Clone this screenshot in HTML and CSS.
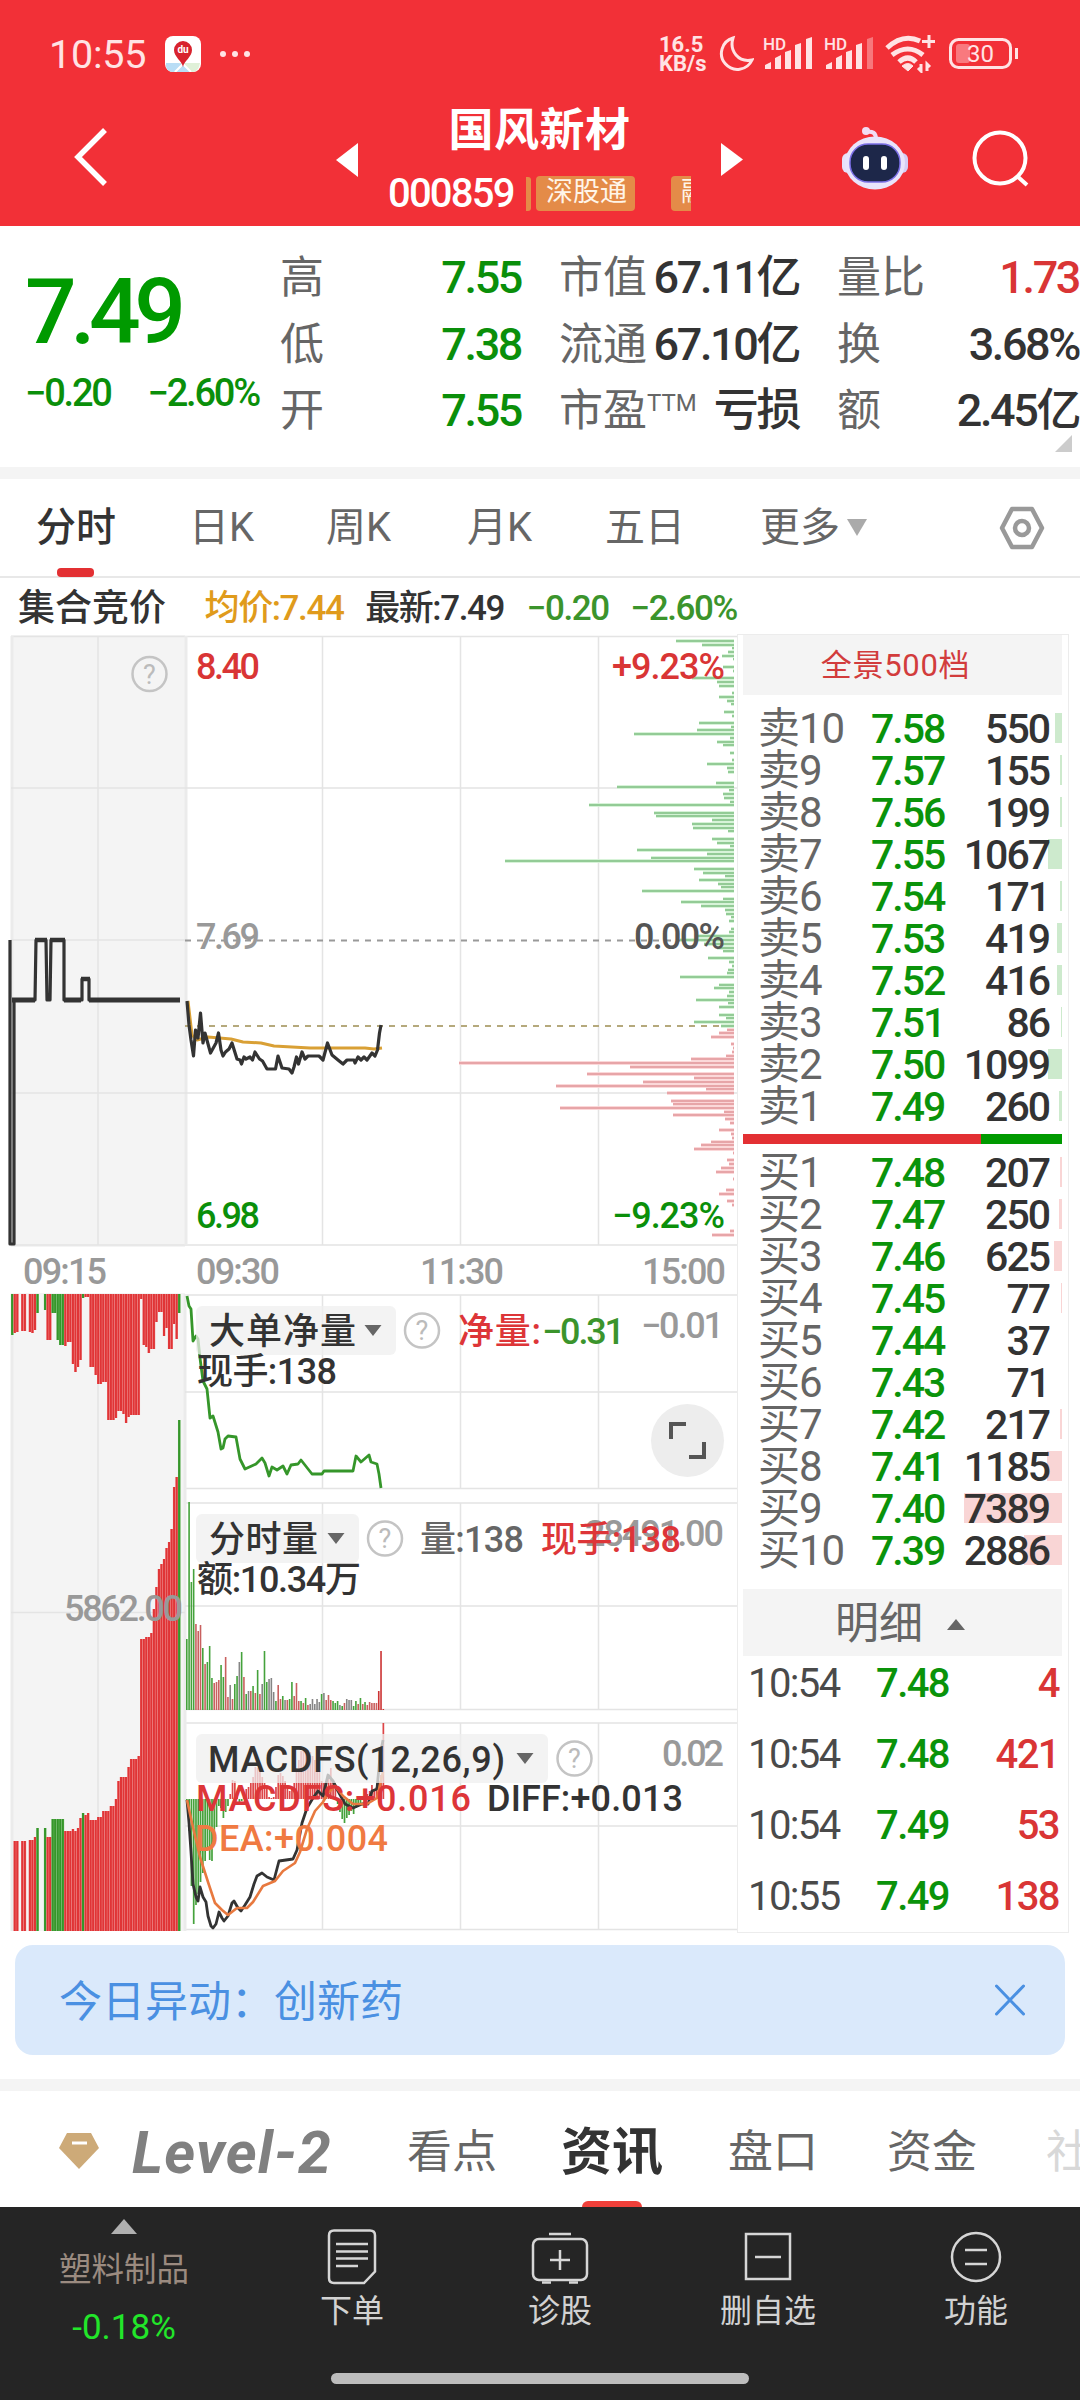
FILE: index.html
```html
<!DOCTYPE html>
<html lang="zh-CN">
<head>
    <meta charset="UTF-8">
    <meta name="viewport" content="width=device-width, initial-scale=1.0">
    <title>国风新材 000859</title>
    <link rel="stylesheet" href="styles.css">
</head>
<body>

    <header class="top">
        <div class="status-bar">
            <div class="status-left">
                <span class="clock">10:55</span>
                <svg class="app-icon" width="36" height="36" viewBox="0 0 36 36">
                    <rect width="36" height="36" rx="8" fill="#fff"/>
                    <path d="M1 27h34l-1 4q-2 5-7 5H9q-6 0-8-6z" fill="#dff0d8"/>
                    <path d="M1 27h12l4 1-8 8q-7 0-8-6zM18 29l8 7H10z" fill="#b9ddf5"/>
                    <path d="M10 36l8-8 8 8" fill="none" stroke="#fff" stroke-width="2"/>
                    <path d="M18 31C17 25 9 21 9 14a9 9 0 0 1 18 0c0 7-8 11-9 17z" fill="#d8232e"/>
                    <text x="18" y="17" class="du">du</text>
                </svg>
                <svg class="dots" width="32" height="8" viewBox="0 0 32 8">
                    <circle cx="4" cy="4" r="3"/><circle cx="16" cy="4" r="3"/><circle cx="28" cy="4" r="3"/>
                </svg>
            </div>
            <div class="status-right">
                <div class="speed"><span>16.5</span><span>KB/s</span></div>
                <svg width="36" height="38" viewBox="0 0 36 38">
                    <path d="M15 3A16 16 0 1 0 34 25Q24 27 18 20T15 3z" class="line"/>
                </svg>
                <svg width="52" height="38" viewBox="0 0 52 38" class="signal">
                    <text x="0" y="15" class="hd">HD</text>
                    <path d="M2 30l6-3v7H2zM12 23l6-3v14h-6zM22 17l6-2v19h-6zM32 10l6-2v26h-6zM43 4l6-2v32h-6z"/>
                </svg>
                <svg width="52" height="38" viewBox="0 0 52 38" class="signal">
                    <text x="0" y="15" class="hd">HD</text>
                    <path d="M2 30l6-3v7H2zM12 23l6-3v14h-6zM22 17l6-2v19h-6zM32 10l6-2v26h-6z"/>
                    <path d="M43 4l6-2v32h-6z" opacity=".4"/>
                </svg>
                <svg width="52" height="38" viewBox="0 0 52 38" class="wifi">
                    <path d="M2 13Q18-2 35 6M7 20Q23 8 38 20M14 27Q23 19 31 27" fill="none" stroke-width="5"/>
                    <path d="M17 31q6-5 11 0l-5 5z"/>
                    <path d="M44 0v13M37 6.500h13M36 29v7l-3-3M42 36v-7l3 3" fill="none" stroke-width="3"/>
                </svg>
                <svg width="70" height="38" viewBox="0 0 70 38">
                    <rect x="1.500" y="4.500" width="60" height="28" rx="8" class="line"/>
                    <rect x="7" y="9" width="14" height="19" rx="3" class="charge"/>
                    <path d="M66 13h3v11h-3z" fill="#ffe3e4"/>
                    <text x="31.500" y="27" class="battery">30</text>
                </svg>
            </div>
        </div>

        <div class="title-bar">
            <svg width="36" height="60" viewBox="0 0 36 60"><path d="M33 3L6 30l27 27" class="back"/></svg>
            <svg class="prev" width="22" height="34" viewBox="0 0 22 34"><path d="M22 0v34L0 17z" fill="#fff"/></svg>
            <div class="stock">
                <h1>国风新材</h1>
                <div class="stock-sub">
                    <span class="code">000859</span>
                    <i class="tag-rest"></i>
                    <span class="tag">深股通</span>
                    <span class="tag tag-next">融资</span>
                </div>
            </div>
            <svg class="next" width="22" height="33" viewBox="0 0 22 33"><path d="M0 0v33l22-16.500z" fill="#fff"/></svg>
            <svg class="robot" width="66" height="64" viewBox="0 0 66 64">
                <circle cx="24" cy="5" r="4" fill="#f2dcf4"/>
                <path d="M24 6q10-2 10 7" fill="none" stroke="#f2dcf4" stroke-width="4"/>
                <rect x="0" y="27" width="12" height="20" rx="6" fill="#e6e2fa"/>
                <rect x="54" y="27" width="12" height="20" rx="6" fill="#d5cdf5"/>
                <ellipse cx="33" cy="37" rx="30" ry="26.500" fill="#e9e4fb"/>
                <rect x="8" y="18" width="50" height="38" rx="18" fill="#1d2749" stroke="#7b6fe6" stroke-width="1.500"/>
                <rect x="21" y="30" width="6" height="14" rx="3" fill="#fff"/>
                <rect x="39" y="30" width="6" height="14" rx="3" fill="#fff"/>
            </svg>
            <svg class="search" width="58" height="58" viewBox="0 0 58 58">
                <circle cx="28" cy="28" r="25.500"/><path d="M45 46l10 9"/>
            </svg>
        </div>
    </header>

    <section class="quote">
        <div class="quote-main">
            <div class="price">7.49</div>
            <div class="change"><span>−0.20</span><span>−2.60%</span></div>
        </div>
        <dl class="stats">
            <div><dt>高</dt><dd class="green">7.55</dd></div>
            <div><dt>市值</dt><dd>67.11亿</dd></div>
            <div><dt>量比</dt><dd class="red">1.73</dd></div>
            <div><dt>低</dt><dd class="green">7.38</dd></div>
            <div><dt>流通</dt><dd>67.10亿</dd></div>
            <div><dt>换</dt><dd>3.68%</dd></div>
            <div><dt>开</dt><dd class="green">7.55</dd></div>
            <div><dt>市盈<sup>TTM</sup></dt><dd>亏损</dd></div>
            <div><dt>额</dt><dd>2.45亿</dd></div>
        </dl>
        <i class="corner"></i>
    </section>

    <nav class="periods">
        <span class="active">分时</span>
        <span>日K</span>
        <span>周K</span>
        <span>月K</span>
        <span>五日</span>
        <span class="more">更多 <i></i></span>
        <svg width="46" height="44" viewBox="0 0 46 44">
            <path d="M13 3h20l10 19-10 19H13L3 22z"/><circle cx="23" cy="22" r="7"/>
        </svg>
    </nav>

    <main class="market">
        <div class="charts">
            <div class="chart-info">
                <span class="auction">集合竞价</span>
                <span class="avg">均价:7.44</span>
                <span class="last">最新:7.49</span>
                <span class="diff">−0.20</span>
                <span class="pct">−2.60%</span>
            </div>
            <!-- drawn in page units, see chart.js -->
            <svg id="chart" width="738" height="1300" viewBox="0 634 738 1300">
                <rect x="11" y="635" width="174" height="1296" fill="#f4f4f4"/>
                <rect x="0" y="1247" width="738" height="46" fill="#fff"/>
                <g class="grid">
                    <path d="M11 636.500H737M11 1245H737M185 1295H737M185 1488.500H737M185 1503H737M185 1709.500H737M185 1723H737M185 1929.500H737"/>
                    <path d="M12 636V1245M186 636V1245M12 1294V1931M185 1294V1931" class="wide"/>
                    <path d="M11 788H737M11 940H185M11 1093H737M11 1612.500H185M185 1392H737M185 1606H737M185 1826H737"/>
                    <path d="M98 636V1245M322.500 636V1245M460.500 636V1245M598.500 636V1245M98 1294V1931"/>
                    <path d="M322.500 1295V1488M460.500 1295V1488M598.500 1295V1488M322.500 1503V1709M460.500 1503V1709M598.500 1503V1709M322.500 1723V1929M460.500 1723V1929M598.500 1723V1929"/>
                </g>
                <path d="M185 940.500H737" stroke="#999" stroke-width="2" stroke-dasharray="6 6"/>
                <path d="M185 1026H737" stroke="#b5a97c" stroke-width="2" stroke-dasharray="6 6"/>
                <g id="bars"></g>
                <g id="lines"></g>

                <g class="axis">
                    <text x="196" y="679" textLength="64" class="t-red">8.40</text>
                    <text x="612" y="679" textLength="113" class="t-red">+9.23%</text>
                    <text x="196" y="949" textLength="64">7.69</text>
                    <text x="634" y="949" textLength="91" class="t-dark">0.00%</text>
                    <text x="196" y="1228" textLength="64" class="t-green">6.98</text>
                    <text x="612" y="1228" textLength="113" class="t-green">−9.23%</text>
                    <text x="23" y="1284" textLength="84">09:15</text>
                    <text x="196" y="1284" textLength="84">09:30</text>
                    <text x="420" y="1284" textLength="84">11:30</text>
                    <text x="642" y="1284" textLength="84">15:00</text>
                    <text x="64" y="1621" textLength="119">5862.00</text>
                    <text x="641" y="1338" textLength="83">−0.01</text>
                    <text x="585" y="1546" textLength="139">28491.00</text>
                    <text x="662" y="1766" textLength="62">0.02</text>
                </g>

                <g class="pill">
                    <rect x="196" y="1306" width="200" height="49" rx="6"/>
                    <rect x="196" y="1514" width="163" height="49" rx="6"/>
                    <rect x="196" y="1734" width="352" height="49" rx="6"/>
                </g>
                <g class="caret">
                    <path d="M364.500 1325h17l-8.500 11zM327.500 1533h17l-8.500 11zM516.500 1753h17l-8.500 11z"/>
                </g>
                <g class="indicator">
                    <text x="209" y="1344" textLength="147">大单净量</text>
                    <text x="458" y="1344" textLength="83" class="i-red">净量:</text>
                    <text x="542" y="1344" textLength="83" class="i-green">−0.31</text>
                    <text x="197" y="1384" textLength="140">现手:138</text>
                    <text x="209" y="1552" textLength="109">分时量</text>
                    <text x="420" y="1552" textLength="104" class="i-grey">量:138</text>
                    <text x="541" y="1552" textLength="140" class="i-red">现手:138</text>
                    <text x="197" y="1592" textLength="164">额:10.34万</text>
                    <text x="208" y="1772" textLength="297">MACDFS(12,26,9)</text>
                    <text x="196" y="1811" textLength="275" class="i-red">MACDFS:+0.016</text>
                    <text x="487" y="1811" textLength="196">DIFF:+0.013</text>
                    <text x="195" y="1851" textLength="193" class="i-orange">DEA:+0.004</text>
                </g>
                <g class="help">
                    <circle cx="149.500" cy="674" r="17"/><text x="149.500" y="684">?</text>
                    <circle cx="422" cy="1330.500" r="17"/><text x="422" y="1340">?</text>
                    <circle cx="385" cy="1538.500" r="17"/><text x="385" y="1548">?</text>
                    <circle cx="574.500" cy="1758.500" r="17"/><text x="574.500" y="1768">?</text>
                </g>
                <circle cx="687.500" cy="1440.500" r="36.500" fill="#ededed"/>
                <path d="M671 1439v-15h15M704 1442v15h-15" fill="none" stroke="#555" stroke-width="4"/>
            </svg>
        </div>

        <aside class="book">
            <div class="book-head">全景500档</div>
            <div class="levels" id="sell"></div>
            <div class="ratio"><i></i></div>
            <div class="levels" id="buy"></div>
            <div class="detail-head">明细<i></i></div>
            <div class="ticks">
                <div><span>10:54</span><b>7.48</b><em>4</em></div>
                <div><span>10:54</span><b>7.48</b><em>421</em></div>
                <div><span>10:54</span><b>7.49</b><em>53</em></div>
                <div><span>10:55</span><b>7.49</b><em>138</em></div>
            </div>
        </aside>
    </main>

    <div class="notice">
        <span>今日异动：创新药</span>
        <svg width="30" height="32" viewBox="0 0 30 32"><path d="M1.500 2l27 28M28.500 2l-27 28"/></svg>
    </div>

    <nav class="sections">
        <svg class="gem" width="42" height="38" viewBox="0 0 42 38">
            <path d="M9 1h24l8 15-20 21L1 16z" fill="#cdaa78"/>
            <path d="M14 11h15" stroke="#fff" stroke-width="3"/>
        </svg>
        <span class="level2">Level-2</span>
        <span class="item">看点</span>
        <span class="item active">资讯</span>
        <span class="item">盘口</span>
        <span class="item">资金</span>
        <span class="item cut">社区</span>
    </nav>

    <footer class="toolbar">
        <div class="tools">
            <div class="sector">
                <i></i>
                <span>塑料制品</span>
                <b>-0.18%</b>
            </div>
            <div class="tool">
                <svg width="58" height="58" viewBox="0 0 58 58">
                    <path d="M11 2.500h36q5 0 5 5v36L41 55H11q-5 0-5-5V7.500q0-5 5-5z"/>
                    <path d="M13 16h32M13 23.500h32M13 30.500h32M13 38h22"/>
                </svg>
                <span>下单</span>
            </div>
            <div class="tool">
                <svg width="58" height="58" viewBox="0 0 58 58">
                    <rect x="2" y="11" width="54" height="41" rx="6"/>
                    <path d="M18 6h22M29 22v20M19 32h20M11 54.500h9M38 54.500h9"/>
                </svg>
                <span>诊股</span>
            </div>
            <div class="tool">
                <svg width="58" height="58" viewBox="0 0 58 58">
                    <rect x="7" y="6" width="44" height="45"/><path d="M16 29h26"/>
                </svg>
                <span>删自选</span>
            </div>
            <div class="tool">
                <svg width="58" height="58" viewBox="0 0 58 58">
                    <circle cx="29" cy="29" r="24"/><path d="M18 22h22M18 36h22"/>
                </svg>
                <span>功能</span>
            </div>
        </div>
        <div class="home-bar"></div>
    </footer>

    <script src="chart.js"></script>
</body>
</html>
```
FILE: styles.css
```css
* {
    box-sizing: border-box;
}

body {
    margin: 0;
    width: 1080px;
    height: 2400px;
    overflow: hidden;
    background-color: #fff;
    color: #333;
    font-family: Roboto, "Noto Sans CJK SC", sans-serif;
}

svg {
    display: block;
    flex: none;
}

i, em {
    font-style: normal;
}

.green { color: #0a8f0a; }
.red { color: #d93535; }

/* header */
.top {
    height: 226px;
    background-color: #f23037;
    color: #fff;
}

.status-bar {
    height: 90px;
    padding: 18px 61px 0 49px;
    display: flex;
    justify-content: space-between;
    align-items: center;
    color: #ffe3e4;
}

.status-left,
.status-right {
    display: flex;
    align-items: center;
}

.clock {
    width: 116px;
    font-size: 39.5px;
    letter-spacing: -0.2px;
}

.dots {
    margin-left: 18px;
    fill: #ffe3e4;
}

.du {
    font-size: 10px;
    font-weight: 700;
    fill: #fff;
    text-anchor: middle;
}

.status-right svg {
    margin-right: 9px;
}

.status-right .wifi {
    margin-right: 12px;
}

.status-right svg:last-child {
    margin-right: 0;
}

.speed {
    width: 59px;
    display: flex;
    flex-direction: column;
    font-size: 22px;
    line-height: 19px;
    font-weight: 700;
}

.line {
    fill: none;
    stroke: #ffe3e4;
    stroke-width: 3;
}

.signal {
    fill: #ffe3e4;
}

.hd {
    font-size: 17px;
    font-weight: 500;
}

.wifi {
    fill: #ffe3e4;
    stroke: #ffe3e4;
}

.charge {
    fill: #f9797e;
}

.battery {
    font-size: 24px;
    fill: #ffe3e4;
    text-anchor: middle;
}

.title-bar {
    height: 136px;
    padding: 8px 0 0 72px;
    display: flex;
    align-items: flex-start;
}

.title-bar > svg {
    margin-top: 29px;
}

.back {
    fill: none;
    stroke: #fff;
    stroke-width: 5.5;
}

.title-bar > .prev {
    margin: 45px 0 0 228px;
}

.stock {
    width: 303px;
    margin-left: 30px;
    padding-top: 1px;
    overflow: hidden;
}

.stock h1 {
    margin: 0;
    font-size: 45px;
    font-weight: 700;
    line-height: 64px;
    text-align: center;
    letter-spacing: 0.5px;
}

.stock-sub {
    display: flex;
    align-items: center;
    height: 61px;
    width: 400px;
}

.code {
    width: 138px;
    font-size: 40px;
    font-weight: 500;
    letter-spacing: -1.8px;
}

.tag-rest {
    width: 5px;
    height: 34px;
    margin-right: 5px;
    border-radius: 0 3px 3px 0;
    background-color: #e48b48;
}

.tag {
    width: 99px;
    height: 35px;
    padding-left: 10px;
    border-radius: 4px;
    background-color: #e48b48;
    font-size: 27px;
    line-height: 33px;
    color: #fff5e8;
    white-space: nowrap;
}

.tag-next {
    margin-left: 36px;
}

.title-bar > .next {
    margin: 45px 0 0 30px;
}

.title-bar > .robot {
    margin: 28px 0 0 99px;
}

.title-bar > .search {
    margin: 32px 0 0 64px;
}

.search {
    fill: none;
    stroke: #fff;
    stroke-width: 4;
}

/* quote */
.quote {
    position: relative;
    height: 253px;
    border-bottom: 12px solid #f4f4f4;
    display: flex;
    align-items: flex-start;
}

.quote-main {
    width: 280px;
    padding: 34px 0 0 25px;
    color: #0a8f0a;
}

.price {
    font-size: 91px;
    font-weight: 500;
    line-height: 104px;
    letter-spacing: -6.5px;
    color: #009a00;
}

.change {
    display: flex;
    justify-content: space-between;
    width: 234px;
    margin-top: 7px;
    font-size: 38px;
    font-weight: 500;
    line-height: 44px;
    letter-spacing: -2.2px;
}

.stats {
    margin: 19px 0 0;
    display: grid;
    grid-template-columns: 241px 240px 242px;
    grid-auto-rows: 66.5px;
    column-gap: 38px;
}

.stats div {
    display: flex;
    justify-content: space-between;
    align-items: center;
    white-space: nowrap;
    line-height: 66px;
}

.stats dt {
    font-size: 44px;
    color: #666;
}

.stats dd {
    margin: 0;
    font-size: 45px;
    font-weight: 500;
    letter-spacing: -2.4px;
}

.stats sup {
    font-size: 24px;
    line-height: 1;
    vertical-align: 15px;
}

.corner {
    position: absolute;
    right: 8px;
    bottom: 15px;
    border-left: 17px solid transparent;
    border-bottom: 17px solid #ccc;
}

/* period tabs */
.periods {
    height: 99px;
    border-bottom: 2px solid #e8e8e8;
    display: grid;
    grid-template-columns: 153px 137px 141px 138px 155px 239px 1fr;
    padding-left: 36px;
    font-size: 40px;
    line-height: 98px;
    color: #666;
}

.periods .active {
    position: relative;
    font-weight: 500;
    color: #333;
}

.periods .active::after {
    content: "";
    position: absolute;
    left: 21px;
    bottom: 0;
    width: 37px;
    height: 9px;
    border-radius: 4px;
    background-color: #e33033;
}

.periods svg {
    margin-top: 27px;
    fill: none;
    stroke: #999;
    stroke-width: 4.5;
    stroke-linejoin: round;
}

.more i {
    display: inline-block;
    margin: 0 0 5px -3px;
    border: 10px solid transparent;
    border-top: 17px solid #aaa;
    border-bottom: 0;
}

/* charts */
.market {
    height: 1367px;
    display: flex;
}

.charts {
    width: 737px;
}

.chart-info {
    height: 56px;
    padding-left: 18px;
    display: flex;
    font-size: 35px;
    font-weight: 500;
    line-height: 62px;
    letter-spacing: -1.4px;
    white-space: nowrap;
}

.auction { width: 187px; font-size: 37px; letter-spacing: 0; }
.avg { width: 161px; color: #e09b1c; }
.last { width: 162px; }
.diff { width: 104px; color: #3b942c; }
.pct { color: #3b942c; }

.grid path {
    fill: none;
    stroke: #e4e4e4;
    stroke-width: 1.5;
}

.grid .wide {
    stroke: #ebebeb;
    stroke-width: 3;
}

.axis {
    font-size: 36px;
    font-weight: 500;
    fill: #999;
}

.t-red { fill: #d93535; }
.t-green { fill: #0a8f0a; }
.t-dark { fill: #555; }

.pill {
    fill: #efefef;
    fill-opacity: 0.75;
}

.caret {
    fill: #666;
}

.indicator {
    font-size: 36px;
    font-weight: 500;
    fill: #333;
}

.i-red { fill: #dd3538; }
.i-green { fill: #3b942c; }
.i-grey { fill: #666; }
.i-orange { fill: #f07a42; }

.help circle {
    fill: none;
    stroke: #c4c4c4;
    stroke-width: 2.5;
}

.help text {
    font-size: 27px;
    fill: #bbb;
    text-anchor: middle;
}

/* order book */
.book {
    width: 332px;
    height: 1299px;
    margin-top: 56px;
    padding: 0 6px 0 5px;
    border: 1.5px solid #ececec;
}

.book-head {
    height: 60px;
    padding-right: 14px;
    background-color: #f4f4f4;
    color: #d23c3c;
    font-size: 31px;
    line-height: 61px;
    letter-spacing: 0.7px;
    text-align: center;
}

.levels {
    padding-top: 13px;
}

.levels div {
    position: relative;
    height: 42px;
    padding: 0 13px 0 15px;
    display: grid;
    grid-template-columns: 113px 80px 1fr;
    font-size: 41px;
    line-height: 42px;
    white-space: nowrap;
}

.levels span {
    font-size: 42px;
    color: #666;
    letter-spacing: -1px;
}

.levels b {
    font-weight: 500;
    letter-spacing: -2px;
    color: #0a930a;
}

.levels em {
    position: relative;
    font-weight: 500;
    letter-spacing: -2px;
    text-align: right;
}

/* volume bar lies behind the number */
.levels i {
    position: absolute;
    right: 0;
    top: 5px;
    height: 30px;
    background-color: #cdeacd;
}

#buy i {
    background-color: #f9d5d5;
}

.ratio {
    height: 10px;
    margin-top: 6px;
    background-color: #009a00;
}

.ratio i {
    display: block;
    width: 238px;
    height: 10px;
    background-color: #e33033;
}

#buy {
    padding-top: 8px;
}

.detail-head {
    height: 67px;
    margin-top: 17px;
    padding: 3px 0 0 92px;
    display: flex;
    align-items: center;
    background-color: #f4f4f4;
    color: #666;
    font-size: 44px;
    line-height: 60px;
}

.detail-head i {
    margin-left: 24px;
    border: 9px solid transparent;
    border-bottom: 11px solid #666;
    border-top: 0;
}

.ticks div {
    height: 71px;
    padding: 3px 3px 0 5px;
    display: grid;
    grid-template-columns: 128px 80px 1fr;
    font-size: 40px;
    line-height: 50px;
    letter-spacing: -1.6px;
}

.ticks span { color: #4a4a4a; }
.ticks b { font-weight: 500; color: #0a930a; }
.ticks em { font-weight: 500; color: #d93535; text-align: right; }

/* notice */
.notice {
    height: 110px;
    margin: 0 15px 24px;
    padding: 0 40px 0 44px;
    display: flex;
    align-items: center;
    justify-content: space-between;
    border-radius: 18px;
    background-color: #dae9fb;
    color: #4a90e2;
    font-size: 43px;
}

.notice span {
    padding-bottom: 5px;
}

.notice svg {
    fill: none;
    stroke: #4a90e2;
    stroke-width: 3;
    stroke-linecap: round;
}

/* section tabs */
.sections {
    height: 128px;
    padding-left: 58px;
    border-top: 12px solid #f4f4f4;
    display: flex;
    overflow: hidden;
    font-size: 45px;
    line-height: 124px;
    color: #666;
    white-space: nowrap;
}

.gem {
    margin-top: 41px;
}

.level2 {
    flex: none;
    width: 275px;
    margin-left: 32px;
    font-size: 59px;
    font-weight: 700;
    font-style: italic;
    letter-spacing: 1.2px;
    color: #808080;
}

.item {
    flex: none;
    width: 154px;
    height: 116px;
}

.item + .item.active {
    position: relative;
    width: 167px;
    font-size: 51px;
    font-weight: 700;
    color: #333;
}

.item.active::after {
    content: "";
    position: absolute;
    left: 21px;
    bottom: 0;
    width: 60px;
    height: 6px;
    border-radius: 6px 6px 0 0;
    background-color: #f0403a;
}

.active + .item {
    width: 159px;
}

.item.cut {
    margin-left: 5px;
    color: #d8d8d8;
}

/* bottom toolbar */
.toolbar {
    height: 193px;
    background-color: #252525;
}

.tools {
    height: 166px;
    display: grid;
    grid-template-columns: 248px repeat(4, 208px);
}

.sector {
    display: flex;
    flex-direction: column;
    align-items: center;
    padding-top: 12px;
}

.sector i {
    border: 13px solid transparent;
    border-bottom: 15px solid #b0b0b0;
    border-top: 0;
}

.sector span {
    margin-top: 12px;
    font-size: 32.5px;
    line-height: 48px;
    color: #9b8b80;
}

.sector b {
    margin-top: 12px;
    font-size: 35px;
    font-weight: 400;
    line-height: 44px;
    color: #22e62a;
}

.tool {
    display: flex;
    flex-direction: column;
    align-items: center;
    padding-top: 21px;
    font-size: 32px;
    line-height: 50px;
    color: #d2d2d2;
}

.tool svg {
    fill: none;
    stroke: #d6d6d6;
    stroke-width: 2.5;
}

.home-bar {
    width: 418px;
    height: 11px;
    margin: 0 auto;
    border-radius: 6px;
    background-color: #bdbdbd;
}
```
FILE: chart.js
```js
const RED = '#e03436', GREEN = '#35962a', GREY = '#858585', BLACK = '#333';

function rect(x, y, w, h, fill, opacity) {
    return `<rect x="${x}" y="${y}" width="${w}" height="${h}" fill="${fill}" opacity="${opacity || 1}"/>`;
}

function line(points, color, width) {
    return `<polyline points="${points}" fill="none" stroke="${color}" stroke-width="${width}" stroke-linejoin="round"/>`;
}

// price distribution: [y, length]
const asks = [[641,58],[645,32],[648,2],[652,6],[656,12],[659,1],[667,11],[671,1],[678,42],[682,17],[686,15],[693,2],[697,15],[701,7],[704,3],[712,10],[716,2],[723,35],[727,3],[730,37],[734,100],[738,4],[742,17],[745,11],[753,4],[760,2],[764,27],[768,7],[772,6],[783,18],[787,117],[790,5],[794,11],[798,10],[802,4],[805,145],[813,80],[816,78],[820,22],[824,42],[828,41],[831,6],[839,22],[843,17],[846,4],[850,97],[854,27],[858,83],[861,229],[869,40],[873,31],[876,9],[880,35],[884,16],[887,13],[891,92],[899,11],[902,53],[906,33],[910,9],[914,8],[917,3],[921,5],[929,3],[932,5],[936,37],[940,54],[944,30],[948,17],[951,11],[958,26],[962,5],[966,2],[970,6],[973,7],[977,54],[985,15],[988,20],[992,5],[996,7],[1000,38],[1003,6],[1007,15],[1015,15],[1018,8],[1022,40],[1026,13]];
const bids = [[1030,7],[1033,15],[1037,23],[1044,3],[1048,1],[1052,2],[1056,8],[1059,43],[1063,275],[1067,104],[1074,147],[1078,40],[1082,91],[1086,178],[1089,28],[1093,67],[1101,63],[1104,61],[1108,174],[1112,10],[1115,61],[1119,9],[1123,4],[1130,15],[1134,3],[1138,2],[1142,23],[1145,33],[1149,40],[1153,1],[1160,7],[1164,5],[1168,13],[1172,18],[1179,1],[1190,8],[1194,15],[1201,7],[1205,2],[1231,4],[1235,22]];

// call auction: runs of [count, color, height], 0 is a gap
const unmatched = [[1,'g',41],[1,'r',39],[1,'r',38],[1,'r',0],[2,'r',37],[1,'r',0],[1,'r',38],[1,'r',39],[1,'r',36],[1,'g',19],[2,'g',0],[1,'g',16],[2,'r',46],[2,'g',19],[1,'g',46],[2,'g',51],[1,'r',52],[2,'r',48],[1,'r',70],[1,'r',78],[1,'r',73],[1,'r',66],[1,'g',4],[2,'r',3],[2,'r',73],[1,'r',81],[2,'r',90],[2,'r',88],[3,'r',126],[1,'r',124],[2,'r',117],[1,'r',120],[1,'r',129],[1,'r',123],[4,'r',121],[1,'r',5],[1,'r',51],[1,'r',53],[1,'r',59],[2,'r',55],[1,'r',28],[2,'r',18],[1,'r',42],[1,'r',34],[2,'r',55],[1,'r',30],[1,'r',45],[1,'g',19]];
const matched = [[1,'r',0],[2,'r',90],[1,'r',0],[2,'r',90],[1,'r',0],[2,'r',91],[1,'r',94],[1,'g',103],[2,'g',0],[1,'g',103],[2,'r',94],[5,'g',112],[3,'r',100],[1,'r',102],[1,'r',100],[1,'r',103],[1,'r',113],[1,'g',118],[1,'r',116],[1,'r',118],[3,'r',111],[2,'r',114],[3,'r',120],[2,'r',125],[1,'r',132],[1,'r',150],[3,'r',154],[1,'r',164],[3,'r',172],[1,'r',175],[2,'r',292],[2,'r',294],[1,'r',298],[1,'r',322],[1,'r',344],[1,'r',362],[1,'r',367],[1,'r',372],[1,'r',383],[1,'r',389],[1,'r',402],[1,'r',444],[1,'r',454],[1,'g',511]];

// minute volume and its colors
const volume = [71,208,128,141,86,79,85,62,46,48,64,32,27,28,30,45,33,53,13,25,11,26,34,48,58,33,16,19,19,24,17,40,16,26,59,28,31,32,18,9,25,11,14,10,10,11,28,14,27,9,9,7,12,5,6,11,6,11,8,16,17,10,15,10,9,7,9,5,4,7,11,10,10,4,9,6,12,6,8,5,8,7,7,7,19,59,1];
const volumeColor = 'ggggrrrgrgggrrrggrrkrggkgrgkrgrgrkggkkkgrrgkrggrrrgrgrkkkkkgkrrrgggkgrkkkggrgrgrrrrrrrg';

const macd = [-3,-32,-87,-125,-106,-95,-83,-74,-62,-49,-61,-62,-45,-28,-7,-9,-19,-13,-7,5,19,18,5,-3,-2,2,10,12,16,22,32,31,29,22,16,12,2,1,2,12,24,26,23,18,12,8,10,16,31,39,48,49,50,49,47,43,39,33,27,18,16,14,22,31,18,10,-5,-13,-20,-24,-19,-16,-12,-15,-9,-7,-4,2,2,5,8,14,10,12,18,24,76];

let bars = '';

asks.forEach(([y, len]) => {
    bars += rect(734 - len, y - 2, len, 4, '#d3f2d4', 0.9) + rect(734 - len, y - 1, len, 2, '#8fc892', 0.95);
});
bids.forEach(([y, len]) => {
    bars += rect(734 - len, y - 2, len, 4, '#fbd4d5', 0.9) + rect(734 - len, y - 1, len, 2, '#e6a2a5', 0.95);
});

function auction(runs, fromTop) {
    let i = 0;
    runs.forEach(([count, color, h]) => {
        for (let n = 0; n < count; n++, i++) {
            const x = 11 + i * 2.53;
            const y = fromTop ? 1294 : 1931 - h;
            bars += rect(x, y, 2.53, h, color === 'g' ? '#74bd6c' : '#ee8586');
            bars += rect(x + 0.2, y, 2, h, color === 'g' ? GREEN : RED);
        }
    });
}
auction(unmatched, true);
auction(matched, false);

const tones = { r: '#c9605f', g: '#45a23c', k: GREY };
volume.forEach((h, i) => {
    const color = i > 83 ? '#c33' : tones[volumeColor[i]];
    bars += rect(186 + i * 2.285, 1710 - h, 1.6, h, color);
});
macd.forEach((h, i) => {
    const y = h > 0 ? 1799 - h : 1799;
    bars += rect(186 + i * 2.285, y, 1.7, Math.abs(h), h > 0 ? '#dd4547' : '#45a23c');
});
document.getElementById('bars').innerHTML = bars;

const auctionLine = '10,940 10,1244 14,1244 14,1000 35,1000 36,940 46,940 47,1000 50,1000 51,940 64,940 64,1000 82,1000 82,979 89,979 89,1000 180,1000';
const avgLine = '188,1001 192,1035 197,1040 208,1037 231,1039 243,1042 261,1043 274,1046 310,1048 365,1048 374,1049 382,1048';
const priceLine = '187,1001 189,1025 191,1040 193.5,1056 195.5,1030 198,1038 200.5,1013 203,1043 205,1033 210.5,1053 216,1043 218.5,1033 221,1050 223,1056 225.5,1052 229,1049 232,1043 237,1059 240,1060 241.5,1064 244,1057 246,1059 250,1057 252.5,1060 255,1052 259.5,1059 262.5,1061 267,1069 275.5,1069 278,1056 282,1068 289,1069 292,1073 294,1067 296.5,1057 298.5,1064 302,1052 305,1059 308,1056 319,1056 323,1060 327.5,1043 332,1055 338,1060 343,1064 347,1060 354,1060 355,1063 358,1057 361,1060 364,1057 367,1060 372,1053 375,1056 377.5,1050 379.5,1033 381,1025';
const netLine = '187,1296 189,1306 191,1309 193,1341 196,1336 198,1339 200,1358 203,1381 207,1389 210,1418 213,1416 218,1432 221,1449 223,1448 225,1439 228,1436 236,1437 240,1459 245,1469 256,1464 262,1458 265,1463 269,1476 272,1467 277,1470 283,1466 287,1474 291,1465 298,1464 301,1460 312,1474 322,1474 324,1471 353,1471 356,1456 361,1462 369,1455 371,1462 377,1464 379,1474 381,1488';
const diffLine = '187,1800 189,1823 191,1852 193,1884 196,1897 198,1901 200,1887 203,1897 206,1902 208,1916 211,1926 213,1928 216,1924 219,1912 222,1918 224,1921 228,1916 232,1903 234,1901 238,1908 241,1911 245,1905 250,1897 254,1884 257,1876 262,1873 267,1877 274,1880 279,1861 293,1859 297,1850 302,1823 307,1808 313,1798 318,1791 323,1796 328,1775 333,1781 338,1791 345,1804 353,1808 362,1804 368,1804 372,1791 377,1789 380,1756 383,1740';
const deaLine = '187,1800 192,1823 200,1857 208,1882 215,1903 222,1910 228,1915 237,1908 247,1908 253,1902 263,1886 275,1881 283,1871 295,1863 300,1852 307,1829 315,1811 323,1802 328,1793 335,1786 343,1796 353,1804 367,1804 377,1798 380,1785 383,1772';

document.getElementById('lines').innerHTML =
    line(auctionLine, BLACK, 3.2) +
    line('12,1000 35,1000', BLACK, 5) + line('89,1000 180,1000', BLACK, 5) + line('64,1000 81,1000', BLACK, 5) +
    line('35,940 47,940', BLACK, 4.5) + line('50,940 65,940', BLACK, 4.5) + line('81,979 90,979', BLACK, 4.5) +
    line(avgLine, '#d9a035', 3) +
    line(priceLine, BLACK, 3.2) +
    line(netLine, GREEN, 2.8) +
    line(diffLine, BLACK, 2.8) +
    line(deaLine, '#e8793f', 2.6);

// order book: [price, volume, bar width]
const sell = [['7.58',550,7],['7.57',155,2],['7.56',199,2],['7.55',1067,14],['7.54',171,2],['7.53',419,5],['7.52',416,5],['7.51',86,1],['7.50',1099,14],['7.49',260,3]];
const buy = [['7.48',207,2],['7.47',250,3],['7.46',625,8],['7.45',77,1],['7.44',37,0],['7.43',71,0],['7.42',217,2],['7.41',1185,15],['7.40',7389,98],['7.39',2886,38]];

function levels(id, rows, label) {
    document.getElementById(id).innerHTML = rows.map(([price, vol, width], i) => `
        <div><i style="width: ${width}px"></i><span>${label(i)}</span><b>${price}</b><em>${vol}</em></div>`).join('');
}
levels('sell', sell, i => '卖' + (10 - i));
levels('buy', buy, i => '买' + (i + 1));
```
